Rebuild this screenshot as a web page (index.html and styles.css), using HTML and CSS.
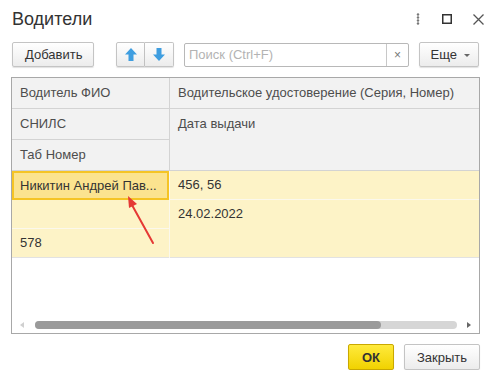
FILE: index.html
```html
<!DOCTYPE html>
<html lang="ru">
<head>
  <meta charset="UTF-8">
  <title>Водители</title>
  <link rel="stylesheet" href="styles.css">
</head>
<body>
  <div class="window">
    <!-- Заголовок окна -->
    <div class="titlebar">
      <h1 class="title">Водители</h1>
      <div class="win-icons">
        <svg width="6" height="12" viewBox="0 0 6 12"><circle cx="3" cy="1.5" r="1.2" fill="#777"/><circle cx="3" cy="4.5" r="1.2" fill="#777"/><circle cx="3" cy="7.5" r="1.2" fill="#777"/><circle cx="3" cy="10.5" r="1.2" fill="#777"/></svg>
        <svg width="10" height="10" viewBox="0 0 10 10"><rect x="0.75" y="0.75" width="8.5" height="8.5" fill="none" stroke="#333" stroke-width="1.5"/></svg>
        <svg width="11" height="11" viewBox="0 0 11 11"><path d="M0.5 0.5 L10.5 10.5 M10.5 0.5 L0.5 10.5" stroke="#555" stroke-width="1.3"/></svg>
      </div>
    </div>

    <!-- Панель команд -->
    <div class="toolbar">
      <button class="btn btn-add">Добавить</button>
      <div class="btn-group">
        <button class="btn btn-icon">
          <svg width="12" height="13" viewBox="0 0 12 13"><path d="M6 0 L12 6.5 L8.5 6.5 L8.5 13 L3.5 13 L3.5 6.5 L0 6.5 Z" fill="#3f9ee0"/></svg>
        </button>
        <button class="btn btn-icon">
          <svg width="12" height="13" viewBox="0 0 12 13"><path d="M6 13 L12 6.5 L8.5 6.5 L8.5 0 L3.5 0 L3.5 6.5 L0 6.5 Z" fill="#3f9ee0"/></svg>
        </button>
      </div>
      <div class="search">
        <span class="search-input">Поиск (Ctrl+F)</span>
        <span class="search-clear">×</span>
      </div>
      <button class="btn btn-more">Еще <span class="caret"></span></button>
    </div>

    <!-- Таблица -->
    <div class="grid">
      <div class="grid-head">
        <div class="col col-left">
          <div class="cell">Водитель ФИО</div>
          <div class="cell">СНИЛС</div>
          <div class="cell">Таб Номер</div>
        </div>
        <div class="col col-right">
          <div class="cell">Водительское удостоверение (Серия, Номер)</div>
          <div class="cell cell-double">Дата выдачи</div>
        </div>
      </div>
      <div class="grid-body">
        <div class="col col-left">
          <div class="cell cell-current">Никитин Андрей Пав...</div>
          <div class="cell"></div>
          <div class="cell">578</div>
        </div>
        <div class="col col-right">
          <div class="cell">456, 56</div>
          <div class="cell cell-double">24.02.2022</div>
        </div>
      </div>
      <div class="grid-empty"></div>
      <div class="hscroll">
        <span class="arrow arrow-left"></span>
        <div class="track"><div class="thumb"></div></div>
        <span class="arrow arrow-right"></span>
      </div>
      <!-- Стрелка-указатель поверх таблицы -->
      <svg class="pointer" width="40" height="60" viewBox="0 0 40 60">
        <path d="M32 53 L11 15" stroke="#e53935" stroke-width="2" stroke-linecap="round"/>
        <path d="M7 6 L16 14 L8 18 Z" fill="#e53935"/>
      </svg>
    </div>

    <!-- Кнопки формы -->
    <div class="footer">
      <button class="btn btn-ok">ОК</button>
      <button class="btn btn-close">Закрыть</button>
    </div>
  </div>
</body>
</html>
```

FILE: styles.css
```css
/* Форма списка в стиле 1С */
body {
  margin: 0;
  background: #fff;
  font-family: "Liberation Sans", Arial, sans-serif;
  font-size: 13px;
  color: #4d4d4d;
}
.window {
  width: 498px;
  padding: 0 18px 0 11px;
  box-sizing: border-box;
}
.titlebar {
  display: flex;
  align-items: center;
  justify-content: space-between;
  height: 40px;
  padding-left: 1px;
}
.title {
  margin: 0;
  font-size: 18px;
  font-weight: normal;
  color: #333;
  position: relative;
  top: -1px;
}
.win-icons {
  display: flex;
  align-items: center;
  gap: 21px;
  margin-right: -4px;
  position: relative;
  top: -1px;
}

/* Кнопки */
.btn {
  font-family: inherit;
  font-size: 13px;
  color: #333;
  height: 25px;
  padding: 0 12px;
  border: 1px solid #c4c4c4;
  border-radius: 2px;
  background: linear-gradient(#ffffff, #ececec);
  box-shadow: 0 1px 1px rgba(0,0,0,0.12);
  cursor: pointer;
}
.toolbar {
  display: flex;
  align-items: center;
  height: 25px;
  margin: 2px 0 10px 1px;
}
.btn-add {
  width: 82px;
}
.btn-group {
  display: flex;
  margin-left: 22px;
}
.btn-icon {
  width: 29px;
  padding: 0;
  display: flex;
  align-items: center;
  justify-content: center;
}
.btn-group .btn-icon:first-child {
  border-radius: 2px 0 0 2px;
}
.btn-group .btn-icon:last-child {
  border-left: 0;
  border-radius: 0 2px 2px 0;
}
.search {
  display: flex;
  margin-left: 10px;
  width: 225px;
  height: 24px;
  border: 1px solid #b8b8b8;
  border-radius: 2px;
  box-sizing: border-box;
}
.search-input {
  flex: 1;
  line-height: 22px;
  padding-left: 4px;
  color: #b3b3b3;
}
.search-clear {
  width: 21px;
  border-left: 1px solid #c8c8c8;
  text-align: center;
  line-height: 22px;
  color: #777;
  font-size: 12px;
}
.btn-more {
  margin-left: 10px;
  width: 60px;
  padding: 0 0 0 2px;
}
.caret {
  display: inline-block;
  width: 0;
  height: 0;
  margin-left: 3px;
  vertical-align: middle;
  border-left: 3px solid transparent;
  border-right: 3px solid transparent;
  border-top: 3px solid #666;
}

/* Таблица */
.grid {
  position: relative;
  height: 257px;
  border: 1px solid #a8a8a8;
  box-sizing: border-box;
  display: flex;
  flex-direction: column;
}
.grid-head,
.grid-body {
  display: flex;
}
.col {
  display: flex;
  flex-direction: column;
}
.col-left {
  width: 157px;
  border-right: 1px solid #d3d3d3;
}
.col-right {
  flex: 1;
}
.cell {
  height: 30px;
  line-height: 30px;
  padding: 0 8px;
  border-bottom: 1px solid #d3d3d3;
  white-space: nowrap;
  overflow: hidden;
}
.cell-double {
  height: 61px;
}
.grid-head .cell {
  background: #f2f2f2;
}
.grid-body .col-left {
  border-right-color: #fbf8ec;
}
.grid-body .cell {
  height: 28px;
  line-height: 28px;
  background: #fdf3c7;
  border-bottom-color: #fbf8ec;
  color: #333;
}
.grid-body .cell-double {
  height: 57px;
}
.grid-body .cell:last-child {
  border-bottom-color: #e2e2e2;
}
.grid-body .cell-current {
  background: #fbe38f;
  border: 2px solid #f5c425;
  height: 25px;
  line-height: 25px;
  padding: 0 6px;
}
.grid-empty {
  flex: 1;
}
.hscroll {
  display: flex;
  align-items: center;
  height: 8px;
  padding: 0 8px 4px 8px;
}
.track {
  flex: 1;
  height: 8px;
  margin: 0 10px 0 11px;
  background: #d6d6d6;
  border-radius: 4px;
}
.thumb {
  width: 346px;
  height: 8px;
  background: #9a9a9a;
  border-radius: 4px;
}
.arrow {
  width: 0;
  height: 0;
  border-top: 3px solid transparent;
  border-bottom: 3px solid transparent;
}
.arrow-left {
  border-right: 4px solid #d0d0d0;
}
.arrow-right {
  border-left: 4px solid #666;
}
.pointer {
  position: absolute;
  left: 109px;
  top: 112px;
}

/* Нижние кнопки */
.footer {
  display: flex;
  justify-content: flex-end;
  gap: 10px;
  margin-top: 10px;
}
.btn-ok {
  width: 46px;
  padding: 0;
  height: 26px;
  font-weight: bold;
  color: #333;
  border-color: #c9a800;
  background: linear-gradient(#ffea3c, #f1d200);
}
.btn-close {
  width: 76px;
  padding: 0;
  height: 26px;
}
```
